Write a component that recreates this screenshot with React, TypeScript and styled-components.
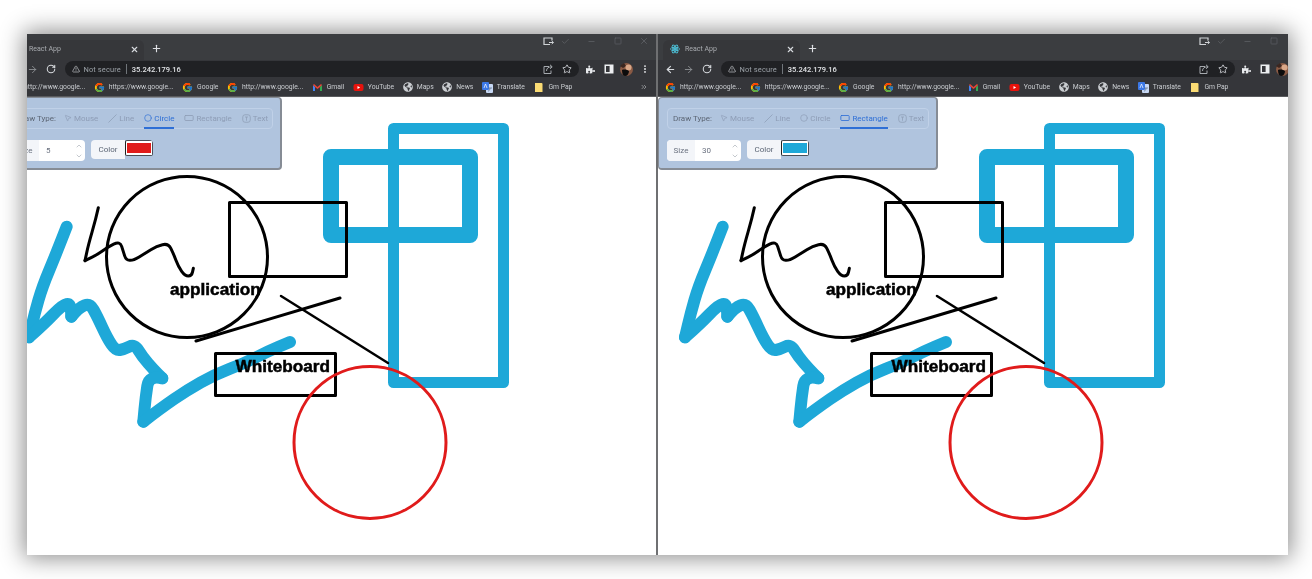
import React from "react";
import styled, { createGlobalStyle } from "styled-components";
import { ArrowLeft, ArrowRight, RotateCw, TriangleAlert, Star, X, Plus, Minus, Square, Check, MoreVertical, ChevronUp, ChevronDown, ChevronsRight, MousePointer2, Slash, Circle, RectangleHorizontal } from "lucide-react";
import { FcGoogle } from "react-icons/fc";
import { FaPuzzlePiece, FaGlobeAmericas } from "react-icons/fa";

const Global = createGlobalStyle`
  html, body { margin: 0; padding: 0; background: #fff; width: 1312px; height: 579px; overflow: hidden; }
  body { font-family: "Roboto", "Liberation Sans", sans-serif; }
`;

const Frame = styled.div`
  display: flex;
  width: 1261px;
  height: 521px;
  margin: 34px 0 0 27px;
  box-shadow: 0 0 22px 3px rgba(0, 0, 0, 0.45);
  background: #fff;
`;
const Pane = styled.div<{ $w: number }>`
  width: ${(p) => p.$w}px;
  height: 100%;
  overflow: hidden;
  flex: none;
`;
const Divider = styled.div`
  width: 2px;
  flex: none;
  background: #6f7072;
`;
const Win = styled.div<{ $shift: number }>`
  width: 654px;
  margin-left: ${(p) => p.$shift}px;
  display: flex;
  flex-direction: column;
  filter: blur(0.4px);
`;
const TabStrip = styled.div`
  height: 26px;
  background: #3b3d40;
  display: flex;
  align-items: flex-end;
  padding-left: 5px;
  color: #c4c7c9;
  position: relative;
`;
const ActiveTab = styled.div`
  width: 137px;
  height: 20px;
  box-sizing: border-box;
  background: #36373a;
  border-radius: 6px 6px 0 0;
  display: flex;
  align-items: center;
  padding: 2px 5px 4px 7px;
  font-size: 7px;
  color: #a9acb0;
`;
const TabTitle = styled.span`
  flex: 1;
  margin-left: 5px;
`;
const NewTab = styled.div`
  display: flex;
  align-items: center;
  height: 20px;
  padding: 0 0 4px 7px;
  box-sizing: border-box;
  color: #dfe1e5;
`;
const WinControls = styled.div`
  display: flex;
  align-items: center;
  position: absolute;
  left: 540px;
  top: 2px;
  color: #5f6266;
`;
const WinBtn = styled.div<{ $w: number; $c?: string }>`
  width: ${(p) => p.$w}px;
  display: flex;
  justify-content: center;
  color: ${(p) => p.$c || "inherit"};
`;
const Toolbar = styled.div`
  height: 18px;
  background: #35363a;
  display: flex;
  align-items: center;
  color: #d7dade;
  padding-left: 3px;
`;
const NavBtn = styled.div<{ $c?: string }>`
  width: 18.5px;
  display: flex;
  justify-content: center;
  color: ${(p) => p.$c || "inherit"};
`;
const Address = styled.div`
  width: 514px;
  height: 16px;
  margin-left: 4px;
  background: #202124;
  border-radius: 8px;
  display: flex;
  align-items: center;
  padding: 0 7px;
  box-sizing: border-box;
  font-size: 7.5px;
  color: #9aa0a6;
`;
const Insecure = styled.span`
  margin-left: 4px;
  letter-spacing: 0.1px;
`;
const Sep = styled.span`
  width: 1px;
  height: 10px;
  background: #70757a;
  margin: 0 5px;
`;
const Url = styled.span`
  color: #e3e5e8;
  flex: 1;
  font-weight: 500;
`;
const AddrIcons = styled.div`
  display: flex;
  gap: 9px;
  color: #a5a9ae;
  align-items: center;
`;
const ToolIcons = styled.div`
  display: flex;
  align-items: center;
  margin-left: 3px;
  color: #e8eaed;
`;
const ToolIcon = styled.div`
  width: 18px;
  display: flex;
  justify-content: center;
  align-items: center;
`;
const Bookmarks = styled.div`
  height: 19px;
  box-sizing: border-box;
  background: #35363a;
  border-bottom: 1px solid #5a5b5e;
  display: flex;
  align-items: center;
  padding-left: 7px;
  gap: 8.5px;
  font-size: 6.8px;
  color: #c9ccd0;
  position: relative;
  white-space: nowrap;
`;
const Mark = styled.div`
  display: flex;
  align-items: center;
  gap: 4px;
`;
const More = styled.div`
  position: absolute;
  left: 638px;
  top: 5px;
  color: #b0b3b7;
  display: flex;
`;
const Canvas = styled.div`
  height: 458px;
  background: #fff;
  position: relative;
`;
const Board = styled.svg`
  display: block;
`;
const BoardText = styled.text`
  font-family: "Liberation Sans", sans-serif;
  font-weight: 700;
  font-size: 17.2px;
  fill: #000;
  stroke: #000;
  stroke-width: 0.5px;
`;
const ToolPanel = styled.div`
  position: absolute;
  left: 0;
  top: 0;
  width: 280px;
  height: 73px;
  box-sizing: border-box;
  background: #b0c4de;
  border: 1px solid #868c95;
  border-width: 1px 2px 2px 1px;
  border-radius: 4px;
  padding: 10px 8px 0 8px;
  font-size: 8px;
`;
const TypeRow = styled.div`
  height: 21px;
  box-sizing: border-box;
  width: 262px;
  border: 1px solid #c0d1e8;
  border-radius: 4px;
  display: flex;
  align-items: stretch;
  padding-left: 5px;
  gap: 10px;
  color: #8e9db6;
`;
const TypeLabel = styled.span`
  color: #5c6675;
  align-self: center;
  margin-right: -3px;
  width: 40px;
  white-space: nowrap;
`;
const TypeItem = styled.div<{ $on: boolean }>`
  display: flex;
  align-items: center;
  gap: 2px;
  height: 20px;
  box-sizing: border-box;
  color: ${(p) => (p.$on ? "#2e6fd6" : "#8e9db6")};
  border-bottom: 2px solid ${(p) => (p.$on ? "#2e6fd6" : "transparent")};
  white-space: nowrap;
`;
const ValueRow = styled.div`
  display: flex;
  margin-top: 11px;
  gap: 6px;
`;
const SizeBox = styled.div`
  width: 74px;
  height: 21px;
  display: flex;
  border-radius: 4px;
  overflow: hidden;
  background: #fff;
`;
const AddOn = styled.div`
  width: 28px;
  background: #f3f5f9;
  display: flex;
  align-items: center;
  justify-content: center;
  color: #6b7280;
`;
const SizeValue = styled.div`
  flex: 1;
  padding-left: 7px;
  display: flex;
  align-items: center;
  color: #6b7280;
`;
const Stepper = styled.div`
  width: 12px;
  display: flex;
  flex-direction: column;
  align-items: center;
  justify-content: center;
  gap: 2px;
  color: #a8adb5;
`;
const ColorBox = styled.div`
  display: flex;
  height: 19px;
  border-radius: 4px;
  overflow: hidden;
`;
const ColorLabel = styled.div`
  width: 34px;
  background: #f3f5f9;
  display: flex;
  align-items: center;
  justify-content: center;
  color: #5c6675;
`;
const Swatch = styled.div<{ $c: string }>`
  width: 28px;
  height: 16px;
  box-sizing: border-box;
  border: 1px solid #4a4f57;
  border-left: 1.5px solid #222;
  border-radius: 2px;
  background: #fff;
  padding: 2px 1px;
  display: flex;
  &::after {
    content: "";
    flex: 1;
    background: ${(p) => p.$c};
  }
`;

const Gmail = () => (
  <svg width="11" height="11" viewBox="0 0 11 11">
    <path d="M1 3v6h2V5z" fill="#4285f4" />
    <path d="M8 5v4h2V3z" fill="#34a853" />
    <path d="M1 3l2 2 2.5 2L8 5l2-2-1-1-3.5 3L2 2z" fill="#ea4335" />
  </svg>
);
const Youtube = () => (
  <svg width="11" height="11" viewBox="0 0 11 11">
    <rect x="0.5" y="2" width="10" height="7" rx="2" fill="#e8120c" />
    <path d="M4.5 4l2.6 1.5L4.5 7z" fill="#fff" />
  </svg>
);
const Translate = () => (
  <svg width="11" height="11" viewBox="0 0 11 11">
    <rect x="4" y="2" width="7" height="9" rx="1" fill="#c7d8f5" />
    <rect x="0" y="0" width="7" height="8" rx="1" fill="#3b78e7" />
    <path d="M2 6l1.5-4L5 6" stroke="#fff" strokeWidth="0.7" fill="none" />
    <path d="M6.5 6h3.5M8 6c0 2-1 3-2 3" stroke="#456" strokeWidth="0.6" fill="none" />
  </svg>
);
const Folder = () => (
  <svg width="11" height="11" viewBox="0 0 11 11">
    <path d="M2 1h6.5a1 1 0 011 1v8H2z" fill="#fbdc74" />
  </svg>
);
const ReactLogo = () => (
  <svg width="10" height="10" viewBox="-12 -12 24 24" fill="none" stroke="#4dc4dc" strokeWidth="2">
    <circle r="2.2" fill="#4dc4dc" />
    <ellipse rx="11" ry="4.4" />
    <ellipse rx="11" ry="4.4" transform="rotate(60)" />
    <ellipse rx="11" ry="4.4" transform="rotate(120)" />
  </svg>
);
const Avatar = () => (
  <svg width="13" height="13" viewBox="0 0 13 13">
    <circle cx="6.5" cy="6.5" r="6.5" fill="#8a5a44" />
    <path d="M0 3l4-3 2 3-3 2z" fill="#3a2620" />
    <circle cx="8.5" cy="4.5" r="3" fill="#d9a788" />
    <path d="M2 7c2-1 6 0 7 1 0 3-2 5-4 5-2 0-3-3-3-6z" fill="#0c0c0c" />
  </svg>
);
const TextGlyph = () => (
  <svg width="9" height="9" viewBox="0 0 12 12" fill="none" stroke="currentColor" strokeWidth="1">
    <rect x="1" y="1" width="10" height="10" rx="3" />
    <path d="M4 4h4M6 4v5" />
  </svg>
);
const CastBox = () => (
  <svg width="11" height="9" viewBox="0 0 11 9" fill="none" stroke="currentColor" strokeWidth="1.2">
    <path d="M7 7.5H1V1h8v2.5" />
    <path d="M6 5.5h4.5M8.8 4l1.6 1.5L8.8 7" strokeWidth="1" />
  </svg>
);
const ShareBox = () => (
  <svg width="10" height="10" viewBox="0 0 10 10" fill="none" stroke="currentColor" strokeWidth="1">
    <path d="M6 2.5H1v7h7V6.5" />
    <path d="M3.5 7c0-3 2-4.2 5.5-4.2M7 .8l2.2 2L7 4.8" />
  </svg>
);
const SidePanel = () => (
  <svg width="10" height="10" viewBox="0 0 10 10">
    <rect x="0.5" y="0.5" width="9" height="9" fill="#eceef0" />
    <rect x="2" y="2" width="3.6" height="6" fill="#35363a" />
  </svg>
);

const marks: { icon: React.ReactNode; text: string }[] = [
  { icon: <FcGoogle size={11} />, text: "http://www.google..." },
  { icon: <FcGoogle size={11} />, text: "https://www.google..." },
  { icon: <FcGoogle size={11} />, text: "Google" },
  { icon: <FcGoogle size={11} />, text: "http://www.google..." },
  { icon: <Gmail />, text: "Gmail" },
  { icon: <Youtube />, text: "YouTube" },
  { icon: <FaGlobeAmericas size={10} color="#c9ccd0" />, text: "Maps" },
  { icon: <FaGlobeAmericas size={10} color="#c9ccd0" />, text: "News" },
  { icon: <Translate />, text: "Translate" },
  { icon: <Folder />, text: "Gm Pap" },
];

const tools: { name: string; icon: React.ReactNode }[] = [
  { name: "Mouse", icon: <MousePointer2 size={8} /> },
  { name: "Line", icon: <Slash size={9} /> },
  { name: "Circle", icon: <Circle size={8} /> },
  { name: "Rectangle", icon: <RectangleHorizontal size={10} /> },
  { name: "Text", icon: <TextGlyph /> },
];

type Pt = [number, number];
const smooth = (pts: Pt[]) => {
  let d = `M${pts[0][0]} ${pts[0][1]}`;
  for (let i = 1; i < pts.length - 1; i++) {
    const mx = (pts[i][0] + pts[i + 1][0]) / 2;
    const my = (pts[i][1] + pts[i + 1][1]) / 2;
    d += `Q${pts[i][0]} ${pts[i][1]} ${mx} ${my}`;
  }
  const last = pts[pts.length - 1];
  return d + `L${last[0]} ${last[1]}`;
};

const blueRuns: Pt[][] = [
  [[158, 80], [125, 165], [85, 260], [62, 340], [45, 412]],
  [[45, 412], [90, 372], [145, 315], [170, 310], [172, 350]],
  [[172, 350], [195, 322], [228, 310], [250, 350], [280, 415], [305, 452], [330, 448], [362, 432], [385, 470], [420, 510], [445, 535]],
  [[445, 535], [405, 525], [395, 590], [388, 665]],
  [[388, 665], [440, 625], [520, 570], [600, 525], [690, 490], [760, 455], [828, 426]],
];
const blackRuns: Pt[][] = [
  [[235, 113], [228, 145], [205, 225], [195, 272]],
  [[195, 272], [230, 255], [262, 232], [300, 213], [310, 245], [318, 270], [340, 272], [375, 250], [410, 228], [445, 220], [460, 250], [475, 290], [495, 318], [515, 318], [520, 295]],
];

const blue = "#1ea8d8";
const Drawing = () => (
  <Board width="654" height="458" viewBox="2 97 654 458">
    <g fill="none" strokeLinejoin="round" strokeLinecap="round">
      <g transform="translate(14 200) scale(.33333)" stroke={blue} strokeWidth="36">
        {blueRuns.map((r, i) => <path key={i} d={smooth(r)} />)}
      </g>
      <rect x="393.5" y="128.5" width="110" height="254" stroke={blue} strokeWidth="11" />
      <rect x="331" y="157" width="139" height="78" stroke={blue} strokeWidth="16" />
      <g transform="translate(20 170) scale(.33333)" stroke="#000" strokeWidth="9">
        {blackRuns.map((r, i) => <path key={i} d={smooth(r)} />)}
      </g>
      <circle cx="187" cy="257" r="80.5" stroke="#000" strokeWidth="3" />
      <rect x="229.5" y="202.5" width="117" height="74" stroke="#000" strokeWidth="3" />
      <rect x="215.5" y="353.5" width="120" height="42" stroke="#000" strokeWidth="3" />
      <path d="M196 341L340 298" stroke="#000" strokeWidth="3" />
      <path d="M281 296L388 363" stroke="#000" strokeWidth="2.5" />
      <circle cx="370" cy="442.5" r="76" stroke="#e01b1b" strokeWidth="3" />
    </g>
    <BoardText x="170" y="295">application</BoardText>
    <BoardText x="235.5" y="372">Whiteboard</BoardText>
  </Board>
);

const BrowserWindow = ({ shift, tool, size, color }: { shift: number; tool: string; size: number; color: string }) => (
  <Win $shift={shift}>
    <TabStrip>
      <ActiveTab>
        <ReactLogo />
        <TabTitle>React App</TabTitle>
        <X size={9} color="#d7dade" strokeWidth={3} />
      </ActiveTab>
      <NewTab>
        <Plus size={11} strokeWidth={2.5} />
      </NewTab>
      <WinControls>
        <WinBtn $w={13} $c="#d0d3d6"><CastBox /></WinBtn>
        <WinBtn $w={21}><Check size={9} /></WinBtn>
        <WinBtn $w={30}><Minus size={9} /></WinBtn>
        <WinBtn $w={24}><Square size={8} /></WinBtn>
        <WinBtn $w={28}><X size={10} /></WinBtn>
      </WinControls>
    </TabStrip>
    <Toolbar>
      <NavBtn><ArrowLeft size={11} strokeWidth={2.5} /></NavBtn>
      <NavBtn $c="#8d9094"><ArrowRight size={11} strokeWidth={2} /></NavBtn>
      <NavBtn><RotateCw size={10} strokeWidth={2.5} /></NavBtn>
      <Address>
        <TriangleAlert size={8} color="#c4c7cb" />
        <Insecure>Not secure</Insecure>
        <Sep />
        <Url>35.242.179.16</Url>
        <AddrIcons>
          <ShareBox />
          <Star size={10} color="#d7dade" />
        </AddrIcons>
      </Address>
      <ToolIcons>
        <ToolIcon><FaPuzzlePiece size={9} /></ToolIcon>
        <ToolIcon><SidePanel /></ToolIcon>
        <ToolIcon><Avatar /></ToolIcon>
        <ToolIcon><MoreVertical size={10} strokeWidth={2.5} /></ToolIcon>
      </ToolIcons>
    </Toolbar>
    <Bookmarks>
      {marks.map((m, i) => (
        <Mark key={i}>
          {m.icon}
          <span>{m.text}</span>
        </Mark>
      ))}
      <More><ChevronsRight size={8} /></More>
    </Bookmarks>
    <Canvas>
      <Drawing />
      <ToolPanel>
        <TypeRow>
          <TypeLabel>Draw Type:</TypeLabel>
          {tools.map((t) => (
            <TypeItem key={t.name} $on={t.name === tool}>
              {t.icon}
              <span>{t.name}</span>
            </TypeItem>
          ))}
        </TypeRow>
        <ValueRow>
          <SizeBox>
            <AddOn>Size</AddOn>
            <SizeValue>{size}</SizeValue>
            <Stepper>
              <ChevronUp size={8} />
              <ChevronDown size={8} />
            </Stepper>
          </SizeBox>
          <ColorBox>
            <ColorLabel>Color</ColorLabel>
            <Swatch $c={color} />
          </ColorBox>
        </ValueRow>
      </ToolPanel>
    </Canvas>
  </Win>
);

export default function App() {
  return (
    <>
      <Global />
      <Frame>
        <Pane $w={629}>
          <BrowserWindow shift={-25} tool="Circle" size={5} color="#e01b1b" />
        </Pane>
        <Divider />
        <Pane $w={630}>
          <BrowserWindow shift={0} tool="Rectangle" size={30} color="#1ea8d8" />
        </Pane>
      </Frame>
    </>
  );
}
